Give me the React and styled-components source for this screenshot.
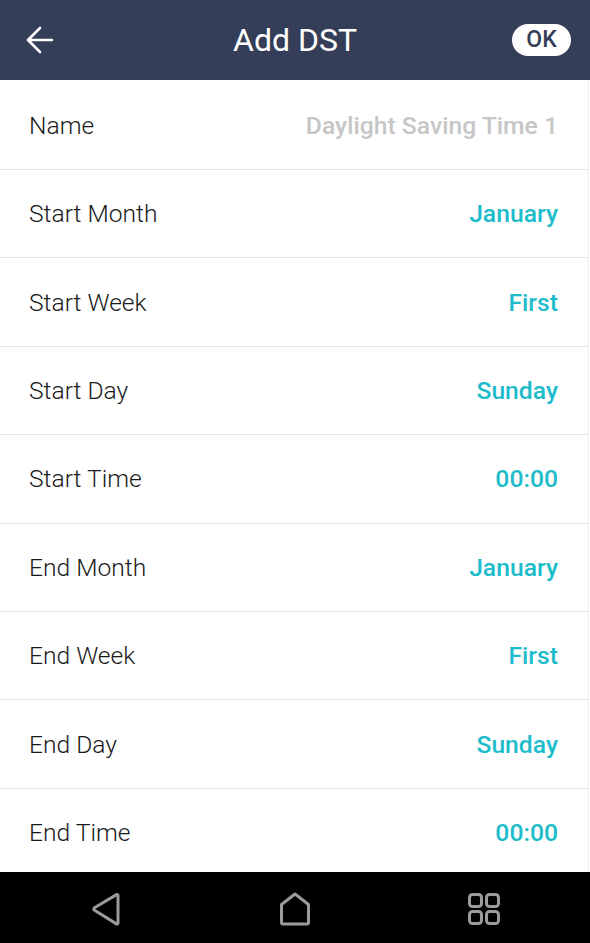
import React from "react";
import styled, { createGlobalStyle } from "styled-components";

const Global = createGlobalStyle`
  html, body { margin: 0; padding: 0; background: #ffffff; }
  body { font-family: Roboto, "Noto Sans", "Liberation Sans", sans-serif; }
  * { box-sizing: border-box; }
`;

const Screen = styled.div`
  width: 590px;
  height: 943px;
  display: flex;
  flex-direction: column;
  background: #ffffff;
  overflow: hidden;
`;

const Header = styled.header`
  height: 80px;
  flex: 0 0 80px;
  background: #353e58;
  display: grid;
  grid-template-columns: 80px 1fr 80px;
  align-items: center;
`;

const BackButton = styled.button`
  border: 0;
  background: transparent;
  padding: 0 0 0 26px;
  height: 80px;
  display: flex;
  align-items: center;
  cursor: pointer;
`;

const Title = styled.h1`
  margin: 0;
  text-align: center;
  color: #ffffff;
  font-size: 32px;
  font-weight: 400;
  letter-spacing: 0;
  line-height: 1;
  padding-bottom: 1px;
`;

const OkButton = styled.button`
  justify-self: start;
  margin-left: 2px;
  width: 59px;
  height: 32px;
  border: 0;
  border-radius: 16px;
  background: #ffffff;
  color: #353e58;
  font-family: Roboto, "Noto Sans", sans-serif;
  font-size: 23px;
  font-weight: 500;
  line-height: 32px;
  padding: 0;
  margin-top: -1px;
  cursor: pointer;
`;

const List = styled.div`
  flex: 1 1 auto;
  overflow: hidden;
  padding-top: 1.6px;
  margin-right: 1px;
  border-right: 1px solid #f0f0f0;
`;

const Row = styled.div`
  height: 88.4px;
  display: flex;
  align-items: center;
  justify-content: space-between;
  padding: 0 30px 0 29px;
  border-bottom: 1px solid #e6e6e6;
`;

const Label = styled.span`
  color: #1a1a1a;
  font-size: 24.6px;
  font-weight: 300;
`;

const Value = styled.span`
  color: ${(p) => (p.$placeholder ? "#c6c6c6" : "#1dbccb")};
  font-size: 24.7px;
  font-weight: 500;
`;

const NavBar = styled.nav`
  flex: 0 0 71px;
  height: 71px;
  background: #000000;
  display: grid;
  grid-template-columns: repeat(3, 1fr);
  align-items: center;
  justify-items: center;
`;

const NavIcon = styled.svg`
  display: block;
  margin-top: 3px;
  margin-left: ${(p) => p.$shift || 0}px;
`;

const rows = [
  ["Name", "Daylight Saving Time 1", true],
  ["Start Month", "January"],
  ["Start Week", "First"],
  ["Start Day", "Sunday"],
  ["Start Time", "00:00"],
  ["End Month", "January"],
  ["End Week", "First"],
  ["End Day", "Sunday"],
  ["End Time", "00:00"],
];

export default function App() {
  return (
    <>
      <Global />
      <Screen>
        <Header>
          <BackButton aria-label="Back">
            <svg width="28" height="28" viewBox="0 0 28 28" fill="none">
              <path
                d="M26 14H2.5M14 2L2 14l12 12"
                stroke="#ffffff"
                strokeWidth="2.6"
                strokeLinecap="round"
                strokeLinejoin="round"
              />
            </svg>
          </BackButton>
          <Title>Add DST</Title>
          <OkButton>OK</OkButton>
        </Header>
        <List>
          {rows.map(([label, value, ph]) => (
            <Row key={label}>
              <Label>{label}</Label>
              <Value $placeholder={ph}>{value}</Value>
            </Row>
          ))}
        </List>
        <NavBar>
          <NavIcon $shift={16} width="32" height="34" viewBox="0 0 32 34" fill="none">
            <path
              d="M28 3.5v27.5a1 1 0 0 1-1.5 0.9L4.5 18.3a1.5 1.5 0 0 1 0-2.6L26.5 2.6a1 1 0 0 1 1.5 0.9z"
              stroke="#9b9b9b"
              strokeWidth="3"
              strokeLinejoin="round"
            />
          </NavIcon>
          <NavIcon width="34" height="34" viewBox="0 0 34 34" fill="none">
            <path
              d="M17 2L3.5 12.5V30.5a1.5 1.5 0 0 0 1.5 1.5h24a1.5 1.5 0 0 0 1.5-1.5V12.5z"
              stroke="#9b9b9b"
              strokeWidth="3"
              strokeLinejoin="round"
            />
          </NavIcon>
          <NavIcon $shift={-16} width="34" height="34" viewBox="0 0 34 34" fill="none" stroke="#9b9b9b" strokeWidth="3">
            <rect x="2.5" y="2.5" width="12" height="12" rx="3" />
            <rect x="19.5" y="2.5" width="12" height="12" rx="3" />
            <rect x="2.5" y="19.5" width="12" height="12" rx="3" />
            <rect x="19.5" y="19.5" width="12" height="12" rx="3" />
          </NavIcon>
        </NavBar>
      </Screen>
    </>
  );
}
